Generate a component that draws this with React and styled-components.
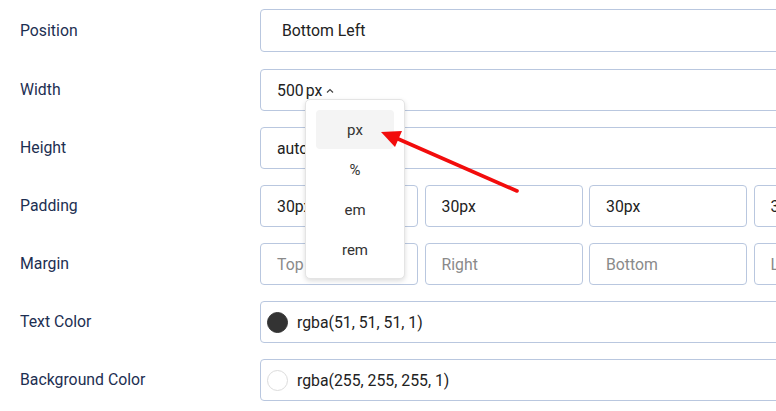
import React from "react";
import styled, { createGlobalStyle } from "styled-components";

const GlobalStyle = createGlobalStyle`
  html, body { margin: 0; padding: 0; background: #ffffff; overflow: hidden; }
  body { font-family: Roboto, "Liberation Sans", Arial, sans-serif; }
`;

const Page = styled.div`
  position: relative;
  width: max-content;
  padding: 10px 0 0 20px;
  display: grid;
  grid-template-columns: 240px 650px;
  row-gap: 16px;
  align-items: center;
`;

const Label = styled.div`
  font-size: 15.8px;
  color: #1d2f52;
  line-height: 20px;
  margin-top: ${(p) => (p.$first ? -2 : 0)}px;
`;

const Field = styled.div`
  position: relative;
  box-sizing: border-box;
  height: ${(p) => (p.$tall ? 43 : 42)}px;
  margin: ${(p) => (p.$tall ? "-1px 0 1px" : "0")};
  border: 1px solid #b9c7df;
  border-radius: 4px;
  padding: 0 16px 0 ${(p) => p.$pad || 16}px;
  display: flex;
  align-items: center;
  gap: ${(p) => p.$gap || 8}px;
  font-size: 15.8px;
  color: #222;
  background: #fff;
`;

const Placeholder = styled.span`
  color: #8a8a8a;
`;

const BoxGroup = styled.div`
  display: grid;
  grid-template-columns: repeat(4, 158px);
  column-gap: 6.5px;
`;

const Swatch = styled.span`
  width: 21px;
  height: 21px;
  border-radius: 50%;
  box-sizing: border-box;
  background: ${(p) => p.$color};
  border: 1px solid ${(p) => (p.$color === "#ffffff" ? "#dcdcdc" : p.$color)};
  flex: none;
`;

const UnitToggle = styled.span`
  display: inline-flex;
  align-items: center;
  gap: 4px;
  margin-left: -6px;
`;

const Menu = styled.div`
  position: absolute;
  left: 44px;
  top: 29px;
  z-index: 5;
  box-sizing: border-box;
  width: 100px;
  padding: 10px 10px 8px;
  background: #fff;
  border: 1px solid #e4e4e4;
  border-radius: 5px;
  box-shadow: 0 2px 5px rgba(0, 0, 0, 0.14);
`;

const MenuItem = styled.div`
  height: 39px;
  margin-bottom: 1px;
  border-radius: 4px;
  display: flex;
  align-items: center;
  justify-content: center;
  font-size: 15px;
  color: #333;
  background: ${(p) => (p.$active ? "#f4f4f4" : "transparent")};
`;

const Annotation = styled.svg`
  position: absolute;
  left: 0;
  top: 0;
  width: 776px;
  height: 411px;
  pointer-events: none;
  z-index: 10;
`;

const Caret = () => (
  <svg width="8" height="6" viewBox="0 0 8 6" style={{ marginTop: 1 }}>
    <path d="M1 4.5 L4 1.5 L7 4.5" fill="none" stroke="#444" strokeWidth="1.2" />
  </svg>
);

export default function App() {
  return (
    <>
      <GlobalStyle />
      <Page>
        <Label $first>Position</Label>
        <Field $tall $pad={21}>Bottom Left</Field>

        <Label>Width</Label>
        <Field>
          <span>500</span>
          <UnitToggle>
            px
            <Caret />
          </UnitToggle>
          <Menu>
            <MenuItem $active>px</MenuItem>
            <MenuItem>%</MenuItem>
            <MenuItem>em</MenuItem>
            <MenuItem>rem</MenuItem>
          </Menu>
        </Field>

        <Label>Height</Label>
        <Field>auto</Field>

        <Label>Padding</Label>
        <BoxGroup>
          {["30px", "30px", "30px", "30px"].map((v, i) => (
            <Field key={i}>{v}</Field>
          ))}
        </BoxGroup>

        <Label>Margin</Label>
        <BoxGroup>
          {["Top", "Right", "Bottom", "Left"].map((v) => (
            <Field key={v}>
              <Placeholder>{v}</Placeholder>
            </Field>
          ))}
        </BoxGroup>

        <Label>Text Color</Label>
        <Field $pad={6} $gap={9}>
          <Swatch $color="#333333" />
          rgba(51, 51, 51, 1)
        </Field>

        <Label>Background Color</Label>
        <Field $pad={6} $gap={9}>
          <Swatch $color="#ffffff" />
          rgba(255, 255, 255, 1)
        </Field>
      </Page>
      <Annotation viewBox="0 0 776 411">
        <line x1="517" y1="191" x2="396" y2="138" stroke="#f20c0c" strokeWidth="3.6" strokeLinecap="round" />
        <polygon points="381,132 402,131 395,147" fill="#f20c0c" />
      </Annotation>
    </>
  );
}
